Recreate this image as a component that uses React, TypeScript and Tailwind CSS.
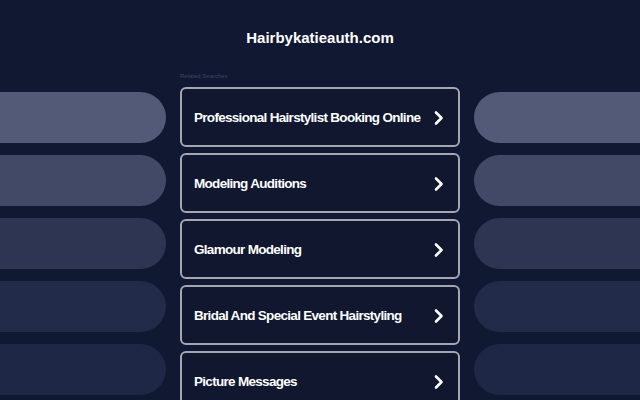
import React from "react";

const searches = [
  "Professional Hairstylist Booking Online",
  "Modeling Auditions",
  "Glamour Modeling",
  "Bridal And Special Event Hairstyling",
  "Picture Messages",
];

const pillColors = ["bg-[#525a78]", "bg-[#414966]", "bg-[#2d3553]", "bg-[#232b4a]", "bg-[#1f2746]"];

const App: React.FC = () => {
  return (
    <div className="h-[400px] w-[640px] overflow-hidden bg-[#111831] font-['Liberation_Sans',Arial,sans-serif]">
      {/* Header */}
      <div className="flex h-[77px] flex-col items-center">
        <h1 className="mt-[29px] text-[15px] font-bold leading-[18px] text-white">Hairbykatieauth.com</h1>
      </div>

      <div className="flex gap-[14px]">
        {/* Left pills */}
        <div className="flex w-[166px] flex-col gap-[12px] pt-[15px]">
          {pillColors.map((c, i) => (
            <div key={i} className={`h-[51px] rounded-r-[26px] ${c}`} />
          ))}
        </div>

        {/* Center list */}
        <div className="w-[280px]">
          <p className="-mt-[6px] mb-[6px] text-[6px] leading-[10px] text-[#3e4667]">Related Searches</p>
          <div className="flex flex-col gap-[6px]">
            {searches.map((s) => (
              <div
                key={s}
                className="flex h-[60px] items-center justify-between rounded-[6px] border-2 border-[#a4a7b3] bg-[#10172f] pl-[12px] pr-[11px] pt-[2px]"
              >
                <span className="whitespace-nowrap text-[13.5px] font-bold tracking-[-0.7px] text-white">{s}</span>
                <svg className="h-[16px] w-[16px]" viewBox="0 0 16 16" fill="none">
                  <path d="M5 2.5l5.5 5.5L5 13.5" stroke="white" strokeWidth="2.6" strokeLinecap="round" strokeLinejoin="round" />
                </svg>
              </div>
            ))}
          </div>
        </div>

        {/* Right pills */}
        <div className="flex w-[166px] flex-col gap-[12px] pt-[15px]">
          {pillColors.map((c, i) => (
            <div key={i} className={`h-[51px] rounded-l-[26px] ${c}`} />
          ))}
        </div>
      </div>
    </div>
  );
};

export default App;
